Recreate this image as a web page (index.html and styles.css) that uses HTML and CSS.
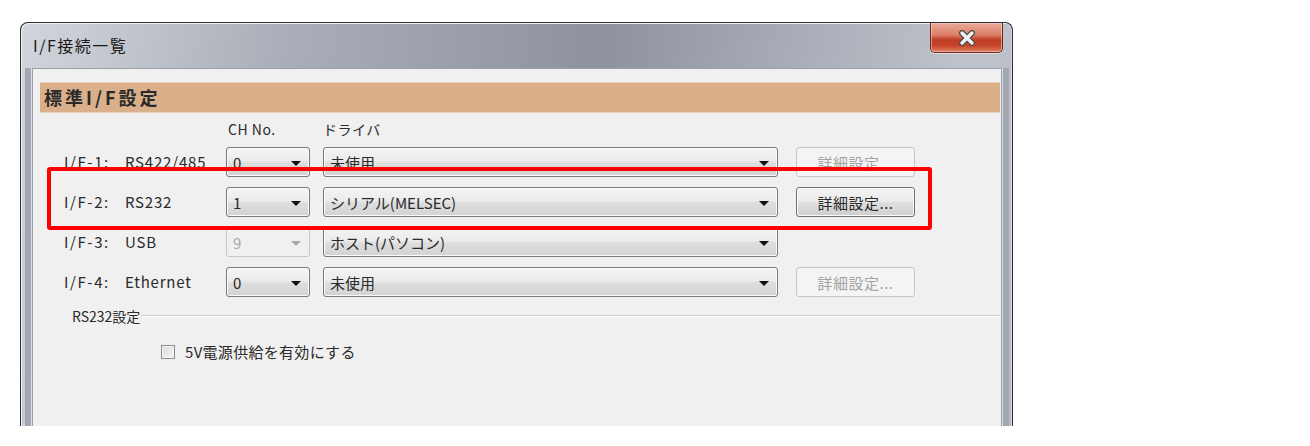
FILE: index.html
```html
<!DOCTYPE html>
<html lang="ja">
<head>
    <meta charset="UTF-8">
    <title>I/F接続一覧</title>
    <link rel="stylesheet" href="styles.css">
</head>
<body>
    <!-- Dialog window -->
    <div class="window">
        <div class="titlebar">
            <span class="title">I/F接続一覧</span>
            <div class="close">
                <svg width="20" height="16" viewBox="0 0 20 16">
                    <path d="M5 3 L15 13 M15 3 L5 13" stroke="#4a4a4a" stroke-width="6" stroke-linecap="round"/>
                    <path d="M5 3 L15 13 M15 3 L5 13" stroke="#f2f2f2" stroke-width="3.4" stroke-linecap="round"/>
                </svg>
            </div>
        </div>

        <div class="panel">
            <div class="section-head">標準I/F設定</div>

            <div class="col-heads">
                <span class="h-ch">CH No.</span>
                <span>ドライバ</span>
            </div>

            <div class="if-rows">
                <div class="if-row">
                    <div class="if-label"><span class="if-id">I/F-1:</span><span>RS422/485</span></div>
                    <div class="combo ch"><span>0</span><i class="arrow"></i></div>
                    <div class="combo drv"><span>未使用</span><i class="arrow"></i></div>
                    <div class="btn disabled">詳細設定...</div>
                </div>

                <div class="if-row marked">
                    <div class="if-label"><span class="if-id">I/F-2:</span><span>RS232</span></div>
                    <div class="combo ch"><span>1</span><i class="arrow"></i></div>
                    <div class="combo drv"><span>シリアル(MELSEC)</span><i class="arrow"></i></div>
                    <div class="btn">詳細設定...</div>
                </div>

                <div class="if-row">
                    <div class="if-label"><span class="if-id">I/F-3:</span><span>USB</span></div>
                    <div class="combo ch disabled"><span>9</span><i class="arrow"></i></div>
                    <div class="combo drv"><span>ホスト(パソコン)</span><i class="arrow"></i></div>
                </div>

                <div class="if-row">
                    <div class="if-label"><span class="if-id">I/F-4:</span><span>Ethernet</span></div>
                    <div class="combo ch"><span>0</span><i class="arrow"></i></div>
                    <div class="combo drv"><span>未使用</span><i class="arrow"></i></div>
                    <div class="btn disabled">詳細設定...</div>
                </div>
            </div>

            <!-- RS232 group -->
            <div class="group-line"><span>RS232設定</span></div>

            <label class="check">
                <span class="box"></span>
                <span>5V電源供給を有効にする</span>
            </label>
        </div>
    </div>
</body>
</html>
```

FILE: styles.css
```css
*, *::before, *::after {
    box-sizing: border-box;
}

body {
    margin: 0;
    padding: 22px 0 0 20px;
    background: #ffffff;
    font-family: "Noto Sans CJK JP", "Noto Sans", sans-serif;
    color: #2a2a2a;
    font-size: 14px;
}

/* Window frame */
.window {
    width: 993px;
    height: 404px;
    border: 1px solid #2b2e34;
    border-bottom: none;
    border-radius: 8px 8px 0 0;
    padding: 0 10px 0 11px;
    display: flex;
    flex-direction: column;
    background: linear-gradient(100deg, #d2d5db 0%, #a9aeb8 25%, #8d929e 55%, #a3a8b3 70%, #bfc3cb 90%, #b7bbc4 100%);
    box-shadow: inset 1px 1px 0 #eef0f3, inset -1px 0 0 #d8dbe1;
}

.titlebar {
    height: 45px;
    display: flex;
    justify-content: space-between;
    align-items: flex-start;
}

.title {
    margin-left: 1px;
    padding-top: 12px;
    font-size: 16px;
    line-height: 20px;
    color: #1a1a1a;
    letter-spacing: 1.5px;
}

.close {
    width: 73px;
    height: 30px;
    margin-right: -1px;
    border: 1px solid #6b2a20;
    border-top: none;
    border-radius: 0 0 5px 5px;
    background: linear-gradient(#e9aa9a 0%, #dc8069 40%, #c03d25 58%, #c6452b 78%, #e08262 100%);
    display: flex;
    align-items: center;
    justify-content: center;
    box-shadow: inset 0 0 0 1px rgba(255, 220, 210, 0.5), 0 1px 0 rgba(255, 255, 255, 0.5);
}

/* Client area */
.panel {
    flex: 1;
    background: #f0f0f0;
    border: 1px solid #9aa0ab;
    border-bottom: none;
    box-shadow: -1px 0 0 #dcdfe4, -7px 0 0 #a2a7b2, 1px 0 0 #dcdfe4, 7px 0 0 #a2a7b2;
}

.section-head {
    margin: 13px 1px 0 7px;
    height: 31px;
    padding-left: 4px;
    background: #d9b08a;
    border-top: 1px solid #ead1b8;
    border-bottom: 1px solid #e9d3bd;
    font-size: 18px;
    font-weight: 700;
    line-height: 29px;
    color: #2a2a2a;
    letter-spacing: 3px;
}

.col-heads {
    height: 34px;
    padding: 7px 0 0 193px;
    display: flex;
    line-height: 18px;
    font-size: 14px;
    letter-spacing: 0.5px;
}

.h-ch {
    width: 97px;
    padding-left: 2px;
}

.if-rows {
    display: flex;
    flex-direction: column;
    gap: 10px;
    padding-left: 31px;
}

.if-row {
    display: flex;
    align-items: center;
    height: 30px;
}

.if-row.marked {
    position: relative;
}

/* red highlight frame over the RS232 row */
.if-row.marked::after {
    content: '';
    position: absolute;
    left: -17px;
    top: -20px;
    width: 885px;
    height: 63px;
    border: 4px solid #ff0000;
    border-radius: 3px;
}

.if-label {
    width: 162px;
    display: flex;
    font-size: 15px;
    letter-spacing: 0.8px;
    padding-bottom: 2px;
}

.if-id {
    width: 61px;
    letter-spacing: 1.6px;
}

.combo {
    height: 30px;
    border: 1px solid #7a7a7a;
    border-radius: 3px;
    background: linear-gradient(#f4f4f4 0%, #ebebeb 45%, #dddddd 55%, #d3d3d3 100%);
    box-shadow: inset 0 0 0 1px #fbfbfb;
    display: flex;
    align-items: center;
    justify-content: space-between;
    padding: 0 8px 0 6px;
    font-size: 15px;
}

.combo.ch {
    width: 84px;
    margin-right: 13px;
}

.combo.drv {
    width: 455px;
    margin-right: 18px;
}

.arrow {
    width: 0;
    height: 0;
    border-left: 5px solid transparent;
    border-right: 5px solid transparent;
    border-top: 5px solid #111;
    margin-top: 2px;
}

.combo.disabled {
    background: #f0f0f0;
    border-color: #c9c9c9;
    box-shadow: none;
    color: #a8a8a8;
}

.combo.disabled .arrow {
    border-top-color: #aaaaaa;
}

.btn {
    width: 119px;
    height: 30px;
    border: 1px solid #707070;
    border-radius: 3px;
    background: linear-gradient(#f3f3f3 0%, #ebebeb 45%, #dddddd 55%, #cfcfcf 100%);
    box-shadow: inset 0 0 0 1px #fcfcfc;
    display: flex;
    align-items: center;
    justify-content: center;
    font-size: 15px;
    letter-spacing: 0.5px;
}

.btn.disabled {
    background: #f4f4f4;
    border-color: #c6c6c6;
    box-shadow: none;
    color: #a3a3a3;
}

/* Group separator */
.group-line {
    margin: 10px 1px 0 39px;
    display: flex;
    align-items: center;
    line-height: 18px;
    font-size: 14px;
}

.group-line::after {
    content: '';
    flex: 1;
    height: 2px;
    margin-left: 1px;
    border-top: 1px solid #cdcdcd;
    border-bottom: 1px solid #ffffff;
}

.check {
    margin: 18px 0 0 128px;
    display: flex;
    align-items: center;
    gap: 10px;
    line-height: 18px;
    font-size: 15px;
    letter-spacing: 0.3px;
}

.box {
    width: 14px;
    height: 14px;
    border: 1px solid #8e8f8f;
    background: linear-gradient(135deg, #dcdcdc, #f6f6f6);
    box-shadow: inset 0 0 0 1px #f4f4f4;
}
```
